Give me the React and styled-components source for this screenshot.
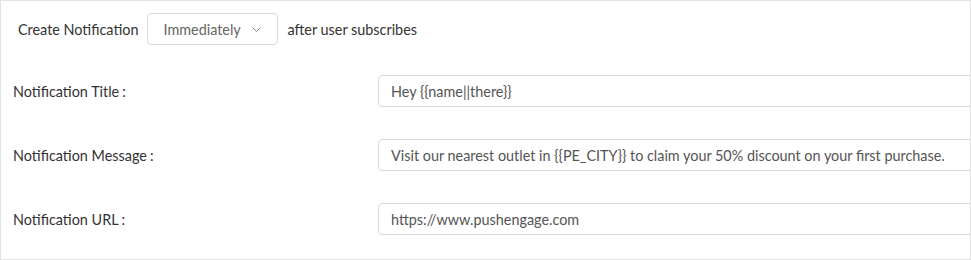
import styled, { createGlobalStyle } from "styled-components";

const GlobalStyle = createGlobalStyle`
  body {
    margin: 0;
    background: #fff;
    font-family: "Lato", "Noto Sans", sans-serif;
  }
`;

const Panel = styled.div`
  box-sizing: border-box;
  width: 971px;
  height: 260px;
  border: 1px solid #e3e3e3;
  overflow: hidden;
  background: #fff;
`;

const TriggerRow = styled.div`
  display: flex;
  align-items: center;
  gap: 9px;
  padding: 12px 0 0 17px;
  font-size: 14.4px;
  color: #333;
`;

const Select = styled.div`
  box-sizing: border-box;
  display: flex;
  align-items: center;
  justify-content: space-between;
  width: 131px;
  height: 32px;
  padding: 0 16px 0 15px;
  border: 1px solid #d9d9d9;
  border-radius: 4px;
  color: #666;
  font-size: 14.4px;
`;

const Fields = styled.div`
  display: flex;
  flex-direction: column;
  gap: 32px;
  padding: 30px 0 0 12px;
`;

const Field = styled.div`
  display: grid;
  grid-template-columns: 365px 600px;
  align-items: center;
`;

const Label = styled.label`
  font-size: 14.4px;
  color: #333;
`;

const Colon = styled.span`
  margin-left: 3px;
`;

const Input = styled.input`
  box-sizing: border-box;
  width: 600px;
  height: 32px;
  padding: 0 12px;
  border: 1px solid #d9d9d9;
  border-radius: 4px;
  font: inherit;
  font-size: 14.4px;
  color: #555;
  outline: none;
`;

const Chevron = () => (
  <svg width="9" height="5" viewBox="0 0 9 5" fill="none">
    <path d="M0.5 0.5L4.5 4.5L8.5 0.5" stroke="#888" strokeWidth="1" />
  </svg>
);

const fields = [
  { label: "Notification Title", value: "Hey {{name||there}}" },
  {
    label: "Notification Message",
    value:
      "Visit our nearest outlet in {{PE_CITY}} to claim your 50% discount on your first purchase.",
  },
  { label: "Notification URL", value: "https://www.pushengage.com" },
];

export default function App() {
  return (
    <>
      <GlobalStyle />
      <Panel>
        <TriggerRow>
          <span>Create Notification</span>
          <Select>
            <span>Immediately</span>
            <Chevron />
          </Select>
          <span>after user subscribes</span>
        </TriggerRow>
        <Fields>
          {fields.map((f) => (
            <Field key={f.label}>
              <Label>
                {f.label}
                <Colon>:</Colon>
              </Label>
              <Input defaultValue={f.value} readOnly />
            </Field>
          ))}
        </Fields>
      </Panel>
    </>
  );
}
